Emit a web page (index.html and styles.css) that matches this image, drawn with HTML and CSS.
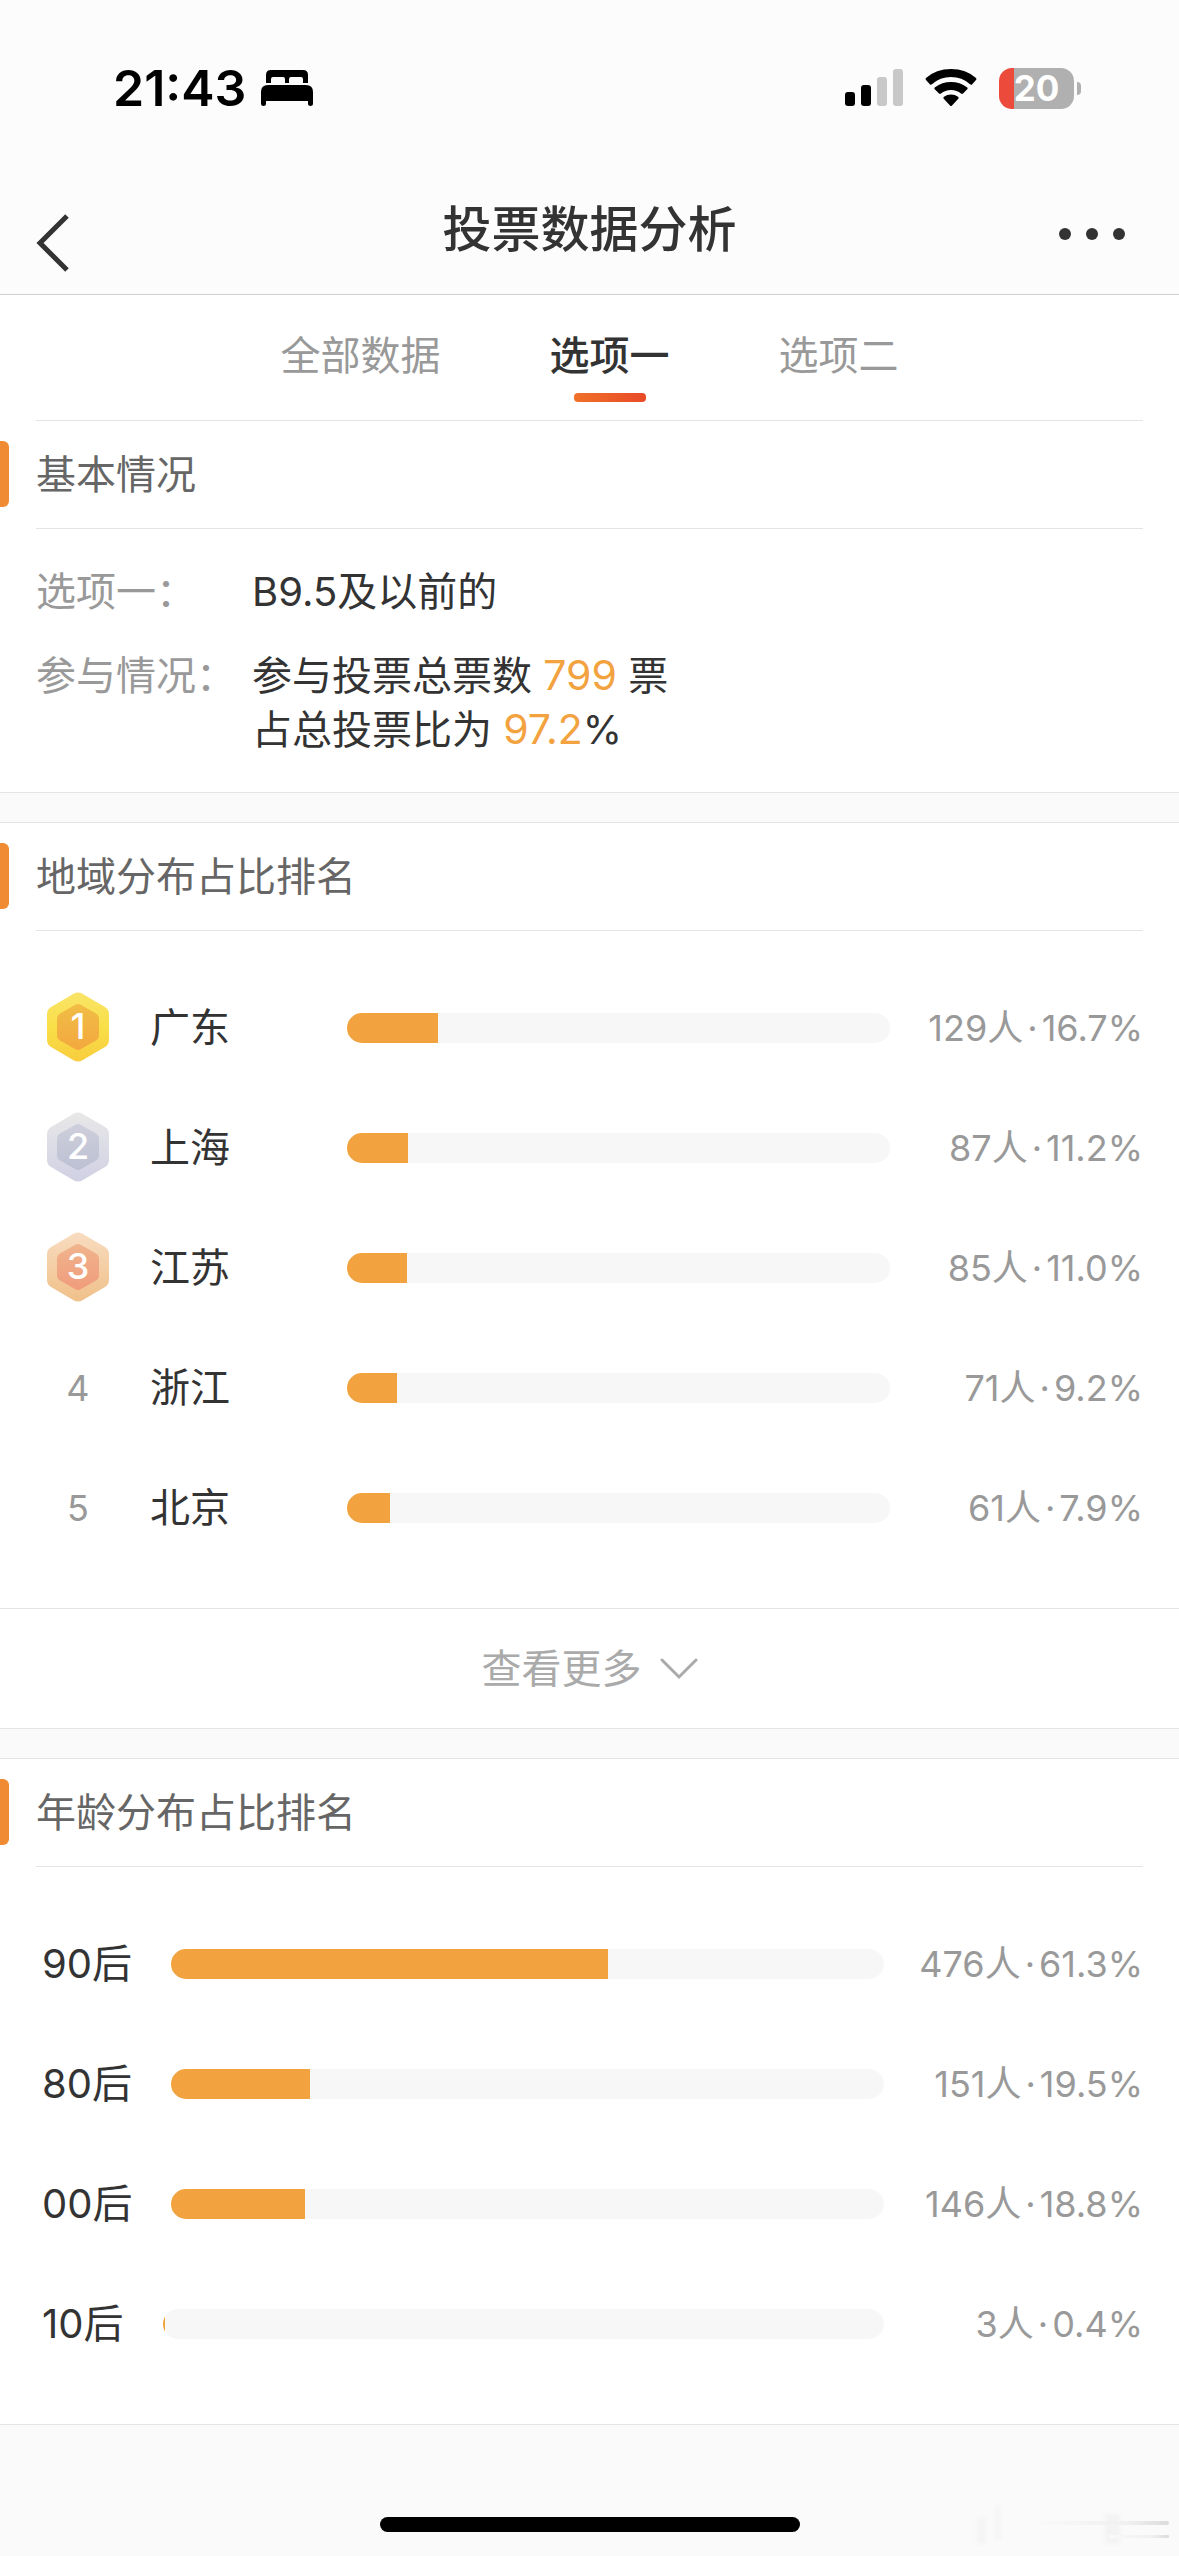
FILE: index.html
```html
<!DOCTYPE html>
<html lang="zh-CN">
<head>
    <meta charset="UTF-8">
    <meta name="viewport" content="width=device-width, initial-scale=1.0">
    <title>投票数据分析</title>
    <link rel="stylesheet" href="styles.css">
</head>
<body>
    <header class="header">
        <div class="status-bar">
            <span class="status-time">21:43</span>
            <svg class="icon-bed" width="52" height="36" viewBox="0 0 52 36">
                <path d="M5 13V5Q5 0 10 0H42Q47 0 47 5V13H42V9Q42 7 40 7H30Q28 7 28 9V13H24V9Q24 7 22 7H12Q10 7 10 9V13Z"/>
                <path d="M0 22Q0 15 7 15H45Q52 15 52 22V34Q52 36 49.500 36Q47 36 47 34V31H5V34Q5 36 2.500 36Q0 36 0 34Z"/>
            </svg>
            <div class="status-icons">
                <svg width="58" height="38" viewBox="0 0 58 38">
                    <rect x="0" y="23" width="10" height="14" rx="3"/>
                    <rect x="16" y="16" width="10" height="21" rx="3"/>
                    <rect x="32" y="8" width="10" height="29" rx="3" fill="#c8c8c8"/>
                    <rect x="48" y="0" width="10" height="37" rx="3" fill="#c8c8c8"/>
                </svg>
                <svg width="52" height="38" viewBox="0 0 52 38">
                    <path d="M1 11Q0 10 1 9Q11 0 26 0T51 9Q52 10 51 11L47 15.500Q46 16 45 15.200Q37 8 26 8T7 15.200Q6 16 5 15.500Z"/>
                    <path d="M9.500 20Q9 19 10 18.200Q17 13 26 13T42 18.200Q43 19 42.500 20L38 24.500Q37 25.300 36 24.500Q32 21 26 21T16 24.500Q15 25.300 14 24.500Z"/>
                    <path d="M18.500 29.500Q18 28.500 19 27.800Q22 25.500 26 25.500T33 27.800Q34 28.500 33.500 29.500L27 36.500Q26 37.500 25 36.500Z"/>
                </svg>
                <div class="battery"><span>20</span></div>
            </div>
        </div>
        <div class="nav-bar">
            <button type="button" class="nav-btn nav-back" aria-label="返回">
                <svg width="34" height="58" viewBox="0 0 34 58" fill="none" stroke="#333" stroke-width="5">
                    <path d="M31 2L4 29L31 56"/>
                </svg>
            </button>
            <h1 class="nav-title">投票数据分析</h1>
            <button type="button" class="nav-btn nav-more" aria-label="更多">
                <svg width="66" height="12" viewBox="0 0 66 12" fill="#333">
                    <circle cx="6" cy="6" r="6"/>
                    <circle cx="33" cy="6" r="6"/>
                    <circle cx="60" cy="6" r="6"/>
                </svg>
            </button>
        </div>
    </header>

    <main>
        <section class="card card-first">
            <nav class="tabs">
                <button type="button" class="tab">全部数据</button>
                <button type="button" class="tab tab-active">选项一</button>
                <button type="button" class="tab">选项二</button>
            </nav>
            <h2 class="card-title">基本情况</h2>
            <dl class="info">
                <dt>选项一：</dt>
                <dd>B9.5及以前的</dd>
                <dt>参与情况：</dt>
                <dd>参与投票总票数 <em>799</em> 票<br>占总投票比为 <em>97.2</em>%</dd>
            </dl>
        </section>

        <section class="card">
            <h2 class="card-title">地域分布占比排名</h2>
            <ul class="rank-list region-list">
                <li>
                    <svg class="medal" width="62" height="70" viewBox="0 0 62 70">
                        <defs>
                            <linearGradient id="gold" x1="0" y1="0" x2="0" y2="1"><stop offset="0" stop-color="#f9e468"/><stop offset="0.500" stop-color="#f9df48"/><stop offset="1" stop-color="#f8cd3e"/></linearGradient>
                            <linearGradient id="goldIn" x1="0" y1="0" x2="0" y2="1"><stop offset="0" stop-color="#f1bd45"/><stop offset="1" stop-color="#f3a83f"/></linearGradient>
                        </defs>
                        <path fill="url(#gold)" d="M27 1.500Q31 -0.500 35 1.500L58 15Q62 17.500 62 22V48Q62 52.500 58 55L35 68.500Q31 70.500 27 68.500L4 55Q0 52.500 0 48V22Q0 17.500 4 15Z"/>
                        <path fill="url(#goldIn)" d="M28 13Q31 11 34 13L49 21.500Q52 23.500 52 27V43Q52 46.500 49 48.500L34 57Q31 59 28 57L13 48.500Q10 46.500 10 43V27Q10 23.500 13 21.500Z"/>
                        <text x="31" y="47" text-anchor="middle">1</text>
                    </svg>
                    <span class="region-name">广东</span>
                    <div class="bar"><div class="bar-fill" style="width: 16.7%"></div></div>
                    <span class="value">129人<i>·</i>16.7%</span>
                </li>
                <li>
                    <svg class="medal" width="62" height="70" viewBox="0 0 62 70">
                        <defs>
                            <linearGradient id="silver" x1="0" y1="0" x2="0" y2="1"><stop offset="0" stop-color="#e8e8e8"/><stop offset="1" stop-color="#d0d0e4"/></linearGradient>
                            <linearGradient id="silverIn" x1="0" y1="0" x2="0" y2="1"><stop offset="0" stop-color="#cfcfdc"/><stop offset="1" stop-color="#bcc0d2"/></linearGradient>
                        </defs>
                        <path fill="url(#silver)" d="M27 1.500Q31 -0.500 35 1.500L58 15Q62 17.500 62 22V48Q62 52.500 58 55L35 68.500Q31 70.500 27 68.500L4 55Q0 52.500 0 48V22Q0 17.500 4 15Z"/>
                        <path fill="url(#silverIn)" d="M28 13Q31 11 34 13L49 21.500Q52 23.500 52 27V43Q52 46.500 49 48.500L34 57Q31 59 28 57L13 48.500Q10 46.500 10 43V27Q10 23.500 13 21.500Z"/>
                        <text x="31" y="47" text-anchor="middle">2</text>
                    </svg>
                    <span class="region-name">上海</span>
                    <div class="bar"><div class="bar-fill" style="width: 11.2%"></div></div>
                    <span class="value">87人<i>·</i>11.2%</span>
                </li>
                <li>
                    <svg class="medal" width="62" height="70" viewBox="0 0 62 70">
                        <defs>
                            <linearGradient id="bronze" x1="0" y1="0" x2="0" y2="1"><stop offset="0" stop-color="#f8dcc0"/><stop offset="1" stop-color="#f0c089"/></linearGradient>
                            <linearGradient id="bronzeIn" x1="0" y1="0" x2="0" y2="1"><stop offset="0" stop-color="#f0b48c"/><stop offset="1" stop-color="#f09c7c"/></linearGradient>
                        </defs>
                        <path fill="url(#bronze)" d="M27 1.500Q31 -0.500 35 1.500L58 15Q62 17.500 62 22V48Q62 52.500 58 55L35 68.500Q31 70.500 27 68.500L4 55Q0 52.500 0 48V22Q0 17.500 4 15Z"/>
                        <path fill="url(#bronzeIn)" d="M28 13Q31 11 34 13L49 21.500Q52 23.500 52 27V43Q52 46.500 49 48.500L34 57Q31 59 28 57L13 48.500Q10 46.500 10 43V27Q10 23.500 13 21.500Z"/>
                        <text x="31" y="47" text-anchor="middle">3</text>
                    </svg>
                    <span class="region-name">江苏</span>
                    <div class="bar"><div class="bar-fill" style="width: 11%"></div></div>
                    <span class="value">85人<i>·</i>11.0%</span>
                </li>
                <li>
                    <span class="rank-num">4</span>
                    <span class="region-name">浙江</span>
                    <div class="bar"><div class="bar-fill" style="width: 9.2%"></div></div>
                    <span class="value">71人<i>·</i>9.2%</span>
                </li>
                <li>
                    <span class="rank-num">5</span>
                    <span class="region-name">北京</span>
                    <div class="bar"><div class="bar-fill" style="width: 7.9%"></div></div>
                    <span class="value">61人<i>·</i>7.9%</span>
                </li>
            </ul>
            <button type="button" class="more-btn">
                查看更多
                <svg width="38" height="22" viewBox="0 0 38 22" fill="none" stroke="#aaa" stroke-width="3" stroke-linecap="round">
                    <path d="M2 2L19 19L36 2"/>
                </svg>
            </button>
        </section>

        <section class="card">
            <h2 class="card-title">年龄分布占比排名</h2>
            <ul class="rank-list age-list">
                <li>
                    <span class="age-name">90后</span>
                    <div class="bar"><div class="bar-fill" style="width: 61.3%"></div></div>
                    <span class="value">476人<i>·</i>61.3%</span>
                </li>
                <li>
                    <span class="age-name">80后</span>
                    <div class="bar"><div class="bar-fill" style="width: 19.5%"></div></div>
                    <span class="value">151人<i>·</i>19.5%</span>
                </li>
                <li>
                    <span class="age-name">00后</span>
                    <div class="bar"><div class="bar-fill" style="width: 18.8%"></div></div>
                    <span class="value">146人<i>·</i>18.8%</span>
                </li>
                <li>
                    <span class="age-name">10后</span>
                    <div class="bar"><div class="bar-fill" style="width: 0.4%"></div></div>
                    <span class="value">3人<i>·</i>0.4%</span>
                </li>
            </ul>
        </section>
    </main>

    <footer class="footer">
        <div class="home-indicator"></div>
        <svg class="smudge" width="210" height="50" viewBox="0 0 210 50">
            <defs>
                <linearGradient id="fade"><stop offset="0" stop-color="#fafafa"/><stop offset="0.700" stop-color="#f0f0f0"/><stop offset="1" stop-color="#dcdcdc"/></linearGradient>
                <filter id="soft"><feGaussianBlur stdDeviation="2"/></filter>
            </defs>
            <g filter="url(#soft)">
                <rect x="8" y="18" width="9" height="26" fill="#f4f4f4"/>
                <rect x="26" y="6" width="6" height="34" fill="#f4f4f4"/>
                <rect x="136" y="14" width="15" height="30" fill="#f3f3f3"/>
            </g>
            <rect x="60" y="21" width="140" height="4" rx="2" fill="url(#fade)"/>
            <rect x="140" y="35" width="60" height="3" rx="1" fill="url(#fade)"/>
        </svg>
    </footer>
</body>
</html>
```

FILE: styles.css
```css
:root {
    --color-text: #333;
    --color-gray: #999;
    --color-orange: #f2a23f;
    --color-line: #e4e4e4;
    --space-side: 36px;
}

* {
    box-sizing: border-box;
}

body {
    margin: 0;
    background-color: #fafafa;
    color: var(--color-text);
    font-family: Inter, "Noto Sans CJK SC", sans-serif;
    font-size: 40px;
    line-height: 54px;
}

button {
    padding: 0;
    border: none;
    background: none;
    color: inherit;
    font: inherit;
    cursor: pointer;
}

svg {
    display: block;
}

/* header */
.header {
    background-color: #fcfcfc;
    border-bottom: 1px solid #d0d0d0;
}

.status-bar {
    display: flex;
    align-items: center;
    padding: 58px 105px 56px 113px;
    height: 174px;
    color: #000;
}

.status-time {
    font-size: 50px;
    font-weight: 600;
}

.icon-bed {
    margin-left: 15px;
}

.status-icons {
    display: flex;
    align-items: center;
    gap: 22px;
    margin-left: auto;
}

.battery {
    position: relative;
    width: 75px;
    height: 41px;
    border-radius: 13px;
    background: linear-gradient(to right, #ec4b3c 15px, #b0b0b0 15px);
    color: #fff;
    font-size: 35px;
    font-weight: 700;
    line-height: 41px;
    text-align: center;
}

.battery::after {
    content: "";
    position: absolute;
    top: 14px;
    right: -7px;
    width: 4px;
    height: 13px;
    border-radius: 0 4px 4px 0;
    background-color: #b0b0b0;
}

.nav-bar {
    display: grid;
    grid-template-columns: 1fr auto 1fr;
    align-items: center;
    height: 120px;
    padding: 0 var(--space-side);
}

.nav-back {
    justify-self: start;
    padding-top: 18px;
}

.nav-more {
    justify-self: end;
    padding: 0 18px;
}

.nav-title {
    margin: 0;
    padding-bottom: 8px;
    font-size: 49px;
    font-weight: 500;
}

/* cards */
.card {
    margin-bottom: 29px;
    border-top: 1px solid var(--color-line);
    border-bottom: 1px solid var(--color-line);
    background-color: #fff;
}

.card:last-child {
    margin-bottom: 0;
}

.card-first {
    border-top: none;
}

.card-title {
    position: relative;
    margin: 0 var(--space-side);
    padding: 26px 0;
    border-bottom: 1px solid var(--color-line);
    color: #666;
    font-size: 40px;
    font-weight: 400;
    line-height: 55px;
}

.card-title::before {
    content: "";
    position: absolute;
    top: 20px;
    left: calc(0px - var(--space-side));
    width: 9px;
    height: 66px;
    border-radius: 0 6px 6px 0;
    background-color: #f08b33;
}

.tabs {
    display: flex;
    justify-content: center;
    gap: 109px;
    margin: 0 var(--space-side);
    height: 126px;
    border-bottom: 1px solid var(--color-line);
}

.tab {
    position: relative;
    padding-bottom: 4px;
    color: var(--color-gray);
}

.tab-active {
    color: var(--color-text);
    font-weight: 500;
}

.tab-active::after {
    content: "";
    position: absolute;
    left: calc(50% - 36px);
    bottom: 18px;
    width: 72px;
    height: 9px;
    border-radius: 4px;
    background: linear-gradient(to right, #f07028, #e84a28);
}

.info {
    display: grid;
    grid-template-columns: 216px 1fr;
    row-gap: 30px;
    margin: 0;
    padding: 36px var(--space-side) 35px;
}

.info dt {
    color: var(--color-gray);
}

.info dd {
    margin: 0;
}

.info em {
    color: var(--color-orange);
    font-size: 41px;
    font-style: normal;
    line-height: 1;
}

/* rank lists */
.rank-list {
    margin: 0;
    padding: 37px var(--space-side) 40px;
    list-style: none;
}

.rank-list li {
    display: flex;
    align-items: center;
    height: 120px;
}

.medal {
    margin: 0 11px 3px;
}

.medal text {
    fill: #fff;
    font-size: 36px;
    font-weight: 500;
}

.rank-num {
    width: 84px;
    color: var(--color-gray);
    font-size: 36px;
    text-align: center;
}

.region-name {
    width: 197px;
    margin-left: 30px;
}

.age-name {
    margin: 0 39px 0 6px;
}

.bar {
    flex: 1;
    height: 30px;
    border-radius: 15px;
    background-color: #f7f7f7;
    overflow: hidden;
}

.bar-fill {
    height: 100%;
    background-color: var(--color-orange);
}

.value {
    width: 253px;
    color: var(--color-gray);
    font-size: 36px;
    text-align: right;
}

.value i {
    margin: 0 4px;
    font-style: normal;
}

.age-list .value {
    width: 259px;
}

.more-btn {
    display: flex;
    align-items: center;
    justify-content: center;
    gap: 18px;
    width: 100%;
    height: 120px;
    border-top: 1px solid var(--color-line);
    color: #aaa;
}

/* bottom area */
.footer {
    position: relative;
    padding: 92px 0 24px;
}

.home-indicator {
    width: 420px;
    height: 15px;
    margin: 0 auto;
    border-radius: 8px;
    background-color: #000;
}

.smudge {
    position: absolute;
    right: 0;
    bottom: 6px;
}
```
